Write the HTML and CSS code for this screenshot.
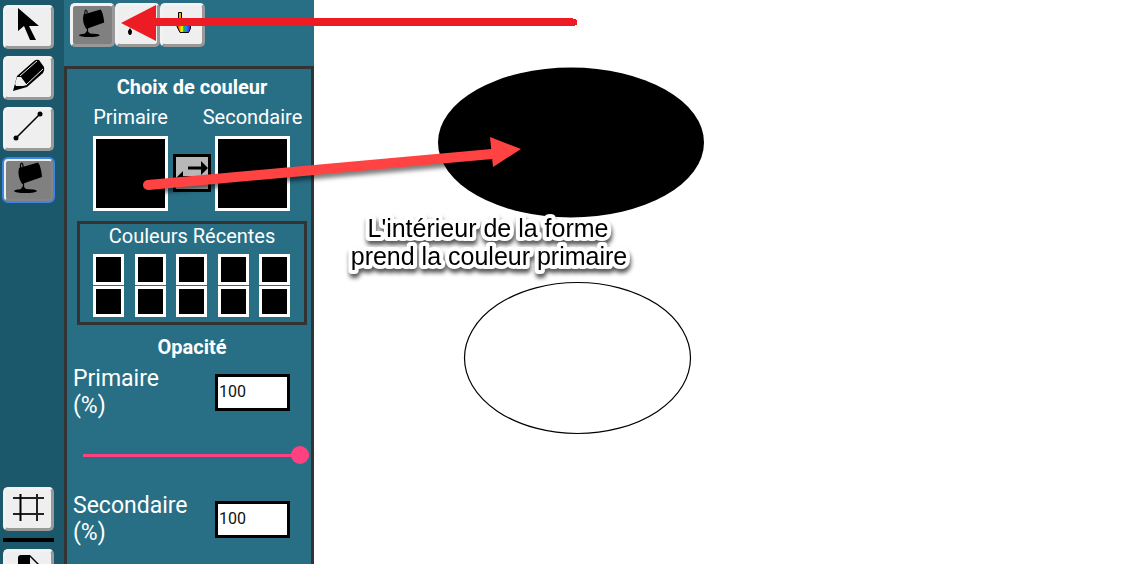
FILE: index.html
```html
<!DOCTYPE html>
<html lang="fr">
<head>
<meta charset="utf-8">
<title>Dessin</title>
<link rel="stylesheet" href="styles.css">
</head>
<body>
<svg class="defs" width="0" height="0" aria-hidden="true">
  <symbol id="bucket" viewBox="6 4 30 32">
    <path d="M11 10 30 4.500Q33 8 34 19L14 26Q9 18 11 10Z"/>
    <path d="M12.500 11V7Q13.500 3 15 7V9M15.500 25V32" fill="none" stroke="#000" stroke-width="1.200"/>
    <ellipse cx="17.500" cy="33" rx="11.500" ry="2"/>
    <path d="M15 28 19 32H12Z"/>
  </symbol>
</svg>
<div class="app">
  <nav class="rail" aria-label="Outils">
    <button class="tool" aria-label="Sélection"><svg width="45" height="38" viewBox="0 0 45 38"><path d="M12 0V23L18 18L24 32H30L23 18H33Z"/></svg></button>
    <button class="tool" aria-label="Crayon"><svg width="45" height="38" viewBox="0 0 45 38"><path d="M7 32 11 17 28 2Q30 0 33 1L38 8Q39 11 37 14L21 28Z"/><path d="M11 18 15 18 21 26 17 27 10 27 9 25Z" fill="#eee"/><path d="M14 17 31 2M20 26 37 10" fill="none" stroke="#eee"/></svg></button>
    <button class="tool" aria-label="Ligne"><svg width="45" height="38" viewBox="0 0 45 38"><path d="M10 28 34 4" stroke="#000" stroke-width="1.600"/><circle cx="10" cy="28" r="2.500"/><circle cx="34" cy="4" r="2.500"/></svg></button>
    <button class="tool active focused" aria-label="Seau"><svg width="30" height="32"><use href="#bucket"/></svg></button>
    <button class="tool grid-tool" aria-label="Grille"><svg width="45" height="38" viewBox="0 0 45 38"><path d="M7 8H38M7 24H38M31 4V31" stroke="#222" stroke-width="2"/><path d="M14.500 4V31" stroke="#000" stroke-width="2"/></svg></button>
    <hr class="divider">
    <button class="tool" aria-label="Nouveau dessin"><svg width="45" height="38" viewBox="0 0 45 38"><path d="M12 6Q12 3 15 3H24L34 13V34H12Z"/><path d="M24 5V13H32Z" fill="#eee"/></svg></button>
  </nav>
  <aside class="panel">
    <div class="modes">
      <button class="tool active" aria-label="Remplissage"><svg width="27" height="29"><use href="#bucket"/></svg></button>
      <button class="tool" aria-label="Pipette"><svg width="38" height="38" viewBox="0 0 38 38"><path d="M11 22 13 25Q13 29 11 29T9 25Z"/><path d="M18 15 26 7" stroke="#000" stroke-width="3"/></svg></button>
      <button class="tool" aria-label="Choisir une couleur"><svg width="38" height="38" viewBox="0 0 38 38"><defs><linearGradient id="rainbow"><stop stop-color="red"/><stop offset=".25" stop-color="#ffb000"/><stop offset=".38" stop-color="#ff0"/><stop offset=".5" stop-color="#19bd19"/><stop offset=".68" stop-color="#1b8cff"/><stop offset="1" stop-color="#6a00e0"/></linearGradient></defs><path d="M14.500 6.500h3v8h4v2h3v1h2v5l-2 4H16l-3-6v-4h1.500Z" fill="url(#rainbow)" stroke="#000"/><path d="M16 7V19" stroke="#fa0" stroke-width="2"/></svg></button>
    </div>
    <div class="settings">
      <h2>Choix de couleur</h2>
      <div class="choices">
        <div class="choice"><span>Primaire</span><button class="swatch" aria-label="Couleur primaire"></button></div>
        <button class="swap" aria-label="Inverser les couleurs"><svg width="32" height="32" viewBox="0 0 32 32"><path d="M12 9.500H25V4L32 11 25 18V12.500H12ZM20 19H7V14L0 21 7 28V22H20Z"/></svg></button>
        <div class="choice"><span>Secondaire</span><button class="swatch" aria-label="Couleur secondaire"></button></div>
      </div>
      <section class="recent">
        <h3>Couleurs Récentes</h3>
        <div class="cells">
          <button aria-label="Récente 1"></button><button aria-label="Récente 2"></button><button aria-label="Récente 3"></button><button aria-label="Récente 4"></button><button aria-label="Récente 5"></button>
          <button aria-label="Récente 6"></button><button aria-label="Récente 7"></button><button aria-label="Récente 8"></button><button aria-label="Récente 9"></button><button aria-label="Récente 10"></button>
        </div>
      </section>
      <h2 class="opacity-title">Opacité</h2>
      <div class="opacity">
        <div class="field"><label for="op1">Primaire (%)</label><input class="number" id="op1" type="text" value="100"></div>
        <input class="slider" type="range" value="100" aria-label="Opacité primaire">
      </div>
      <div class="opacity">
        <div class="field"><label for="op2">Secondaire (%)</label><input class="number" id="op2" type="text" value="100"></div>
        <input class="slider" type="range" value="100" aria-label="Opacité secondaire">
      </div>
    </div>
  </aside>
  <main class="canvas">
    <svg class="drawing" width="500" height="564" viewBox="314 0 500 564">
      <ellipse cx="571" cy="142.500" rx="133" ry="75"/>
      <ellipse cx="577.500" cy="358" rx="113" ry="75.500" fill="#fff" stroke="#000" stroke-width="1.200"/>
    </svg>
  </main>
  <svg class="notes" width="800" height="300" viewBox="0 0 800 300">
    <path d="M121 23 156 5V18H573V19H576V20H577V25H575V26H156V41Z" fill="#ed1c24"/>
    <g class="shadowed"><path d="M148 185 492 154" stroke="#ff4343" stroke-width="10" stroke-linecap="round"/><path d="M490 137 521 149 493 167Z" fill="#ff4343"/></g>
    <g class="caption"><text x="488" y="237">L'intérieur de la forme</text><text x="489" y="265">prend la couleur primaire</text></g>
  </svg>
</div>
</body>
</html>
```
FILE: styles.css
```css
* { box-sizing: border-box; }
body { margin: 0; font-family: Roboto, sans-serif; color: #fff; background: #fff; }
.defs { position: absolute; }
.app { position: relative; display: flex; height: 100vh; overflow: hidden; }
button { padding: 0; margin: 0; }
svg { display: block; }

.rail { flex: none; width: 64px; padding: 5px 10px 0 3px; display: flex; flex-direction: column; gap: 7px; background: #1b586b; }
.tool { flex: none; height: 44px; display: flex; align-items: center; justify-content: center; overflow: hidden; background: #efefef; border: 3px solid; border-color: #f2f2f2 #999 #999 #f2f2f2; border-radius: 5px; }
.tool.active { padding-bottom: 4px; background: #808080; }
.tool.focused { outline: 2px solid #3f84e0; outline-offset: -1px; border-color: #eee #858585 #858585 #eee; }
.grid-tool { margin-top: 278px; }
.divider { flex: none; width: 100%; height: 4px; margin: 0; border: 0; background: #000; }

.panel { flex: none; width: 250px; background: #286f85; }
.modes { height: 66px; padding: 3px 6px; display: flex; }
.modes .tool { width: 45px; }
.settings { min-height: 600px; border: 3px solid #333; padding-top: 6px; }
h2 { margin: 0; padding-left: 6px; font-size: 20px; line-height: 24px; font-weight: 700; text-align: center; }
.choices { display: flex; align-items: flex-end; padding-left: 26px; margin-top: 6px; }
.choice { width: 75px; display: flex; flex-direction: column; align-items: center; font-size: 20px; line-height: 24px; white-space: nowrap; }
.swatch { width: 75px; height: 75px; margin-top: 7px; border: 3px solid #fff; background: #000; }
.swap { width: 38px; height: 38px; margin: 0 4px 19px 5px; border: 3px solid #000; background: #b8b8b8; }
.recent { margin: 10px 4px 0 10px; height: 104px; border: 3px solid #333; }
h3 { margin: 0; font-size: 20px; line-height: 24px; font-weight: 400; text-align: center; }
.cells { width: 197px; margin: 6px 0 0 13px; display: grid; grid-template-columns: repeat(5, 31px); justify-content: space-between; row-gap: 1px; }
.cells button { height: 31px; border: 3px solid #fff; background: #000; }
.opacity-title { margin-top: 10px; }
.opacity { height: 127px; padding: 6px 0 0 6px; }
.field { display: flex; justify-content: space-between; align-items: flex-start; padding-right: 21px; }
.field label { width: 120px; font-size: 23px; line-height: 27px; }
.number { width: 75px; height: 37px; margin-top: 9px; padding: 0 0 2px 1px; border: 3px solid #000; border-radius: 0; background: #fff; color: #111; font: 16px Roboto, sans-serif; }
.slider { display: block; appearance: none; width: 226px; height: 18px; margin: 27px 0 0 10px; background: linear-gradient(#ff4081, #ff4081) center / 100% 3px no-repeat; }
.slider::-webkit-slider-thumb { appearance: none; width: 18px; height: 18px; border-radius: 50%; background: #ff4081; }

.canvas { flex: 1; min-width: 0; background: #fff; }
.notes { position: absolute; left: 0; top: 0; pointer-events: none; }
.shadowed { filter: drop-shadow(2px 4px 2px rgba(0, 0, 0, .5)); }
.caption { font: 25px "Liberation Sans", Arial, sans-serif; text-anchor: middle; fill: #000; stroke: #fff; stroke-width: 8px; stroke-linejoin: round; paint-order: stroke; filter: drop-shadow(1px 4px 2px rgba(0, 0, 0, .65)); }
```
